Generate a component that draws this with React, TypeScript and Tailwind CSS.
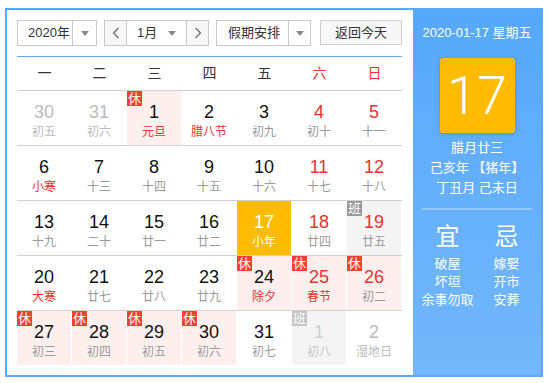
import React from "react";

type Kind = "normal" | "other";
type Day = {
  d: number;
  l: string;
  other?: boolean;
  weekend?: boolean;
  festival?: boolean;
  badge?: "rest" | "work";
  today?: boolean;
};

const weeks: Day[][] = [
  [
    { d: 30, l: "初五", other: true },
    { d: 31, l: "初六", other: true },
    { d: 1, l: "元旦", festival: true, badge: "rest" },
    { d: 2, l: "腊八节", festival: true },
    { d: 3, l: "初九" },
    { d: 4, l: "初十", weekend: true },
    { d: 5, l: "十一", weekend: true },
  ],
  [
    { d: 6, l: "小寒", festival: true },
    { d: 7, l: "十三" },
    { d: 8, l: "十四" },
    { d: 9, l: "十五" },
    { d: 10, l: "十六" },
    { d: 11, l: "十七", weekend: true },
    { d: 12, l: "十八", weekend: true },
  ],
  [
    { d: 13, l: "十九" },
    { d: 14, l: "二十" },
    { d: 15, l: "廿一" },
    { d: 16, l: "廿二" },
    { d: 17, l: "小年", today: true },
    { d: 18, l: "廿四", weekend: true },
    { d: 19, l: "廿五", weekend: true, badge: "work" },
  ],
  [
    { d: 20, l: "大寒", festival: true },
    { d: 21, l: "廿七" },
    { d: 22, l: "廿八" },
    { d: 23, l: "廿九" },
    { d: 24, l: "除夕", festival: true, badge: "rest" },
    { d: 25, l: "春节", festival: true, weekend: true, badge: "rest" },
    { d: 26, l: "初二", weekend: true, badge: "rest" },
  ],
  [
    { d: 27, l: "初三", badge: "rest" },
    { d: 28, l: "初四", badge: "rest" },
    { d: 29, l: "初五", badge: "rest" },
    { d: 30, l: "初六", badge: "rest" },
    { d: 31, l: "初七" },
    { d: 1, l: "初八", other: true, badge: "work" },
    { d: 2, l: "湿地日", other: true },
  ],
];

const weekdays = ["一", "二", "三", "四", "五", "六", "日"];

const Caret = () => (
  <span className="inline-block w-0 h-0 border-l-[4px] border-r-[4px] border-t-[5px] border-l-transparent border-r-transparent border-t-[#8a8a8a]" />
);

const Chevron = ({ dir }: { dir: "l" | "r" }) => (
  <svg width="8" height="12" viewBox="0 0 8 12">
    <polyline
      points={dir === "l" ? "6.5,1 1.5,6 6.5,11" : "1.5,1 6.5,6 1.5,11"}
      fill="none"
      stroke="#666"
      strokeWidth="1.2"
    />
  </svg>
);

const Cell = ({ day }: { day: Day }) => {
  let bg = "";
  if (day.today) bg = "bg-[#ffbb00]";
  else if (day.badge === "work") bg = "bg-[#f4f4f4]";
  else if (day.badge === "rest") bg = "bg-[#fdefee]";

  let numColor = "text-[#111]";
  if (day.today) numColor = "text-white";
  else if (day.other) numColor = day.badge === "work" ? "text-[#cfcfcf]" : "text-[#bbb]";
  else if (day.weekend) numColor = "text-[#e4342c]";

  let lunarColor = "text-[#9a9a9a]";
  if (day.today) lunarColor = "text-white";
  else if (day.other) lunarColor = day.badge === "work" ? "text-[#c8c8c8]" : "text-[#bbb]";
  else if (day.festival) lunarColor = "text-[#e4342c]";

  return (
    <div className="w-[55px] h-[54px] pr-px">
      <div className={`relative h-full flex flex-col items-center ${bg}`}>
        {day.badge && (
          <span
            className={`absolute left-0 top-0 w-[15px] h-[15px] text-[13px] leading-[15px] text-center text-white ${
              day.badge === "rest"
                ? "bg-[#f3402f]"
                : day.other
                ? "bg-[#c4c4c4]"
                : "bg-[#999]"
            }`}
          >
            {day.badge === "rest" ? "休" : "班"}
          </span>
        )}
        <span className={`mt-[10px] text-[18px] leading-[22px] ${numColor}`}>{day.d}</span>
        <span className={`mt-[1px] text-[12px] leading-[17px] ${lunarColor}`}>{day.l}</span>
      </div>
    </div>
  );
};

const App = () => {
  return (
    <div className="w-[550px] h-[383px] bg-white pt-[8px] pl-[5px] font-['Liberation_Sans','Noto_Sans_CJK_SC',sans-serif]">
      <div className="flex w-[538px] h-[369px] border-2 border-[#58aaf9]">
        {/* calendar */}
        <div className="w-[406px] pt-[10px] pl-[10px]">
          <div className="w-[385px] flex items-start pb-[10px] border-b border-[#5aaaf6] text-[13px] text-[#333]">
            <div className="flex w-[80px] h-[26px] border border-[#c8c8c8]">
              <span className="w-[54px] pl-[10px] leading-[24px]">2020年</span>
              <span className="flex-1 flex items-center justify-center border-l border-[#c8c8c8]">
                <Caret />
              </span>
            </div>
            <div className="ml-[7px] flex w-[105px] h-[26px] border border-[#c8c8c8]">
              <span className="w-[22px] flex items-center justify-center bg-[#f7f7f7] border-r border-[#c8c8c8]">
                <Chevron dir="l" />
              </span>
              <span className="flex-1 flex items-center pl-[10px] pr-[10px] justify-between">
                <span className="leading-[24px]">1月</span>
                <Caret />
              </span>
              <span className="w-[22px] flex items-center justify-center bg-[#f7f7f7] border-l border-[#c8c8c8]">
                <Chevron dir="r" />
              </span>
            </div>
            <div className="ml-[7px] flex w-[95px] h-[26px] border border-[#c8c8c8]">
              <span className="w-[71px] pl-[11px] leading-[24px]">假期安排</span>
              <span className="flex-1 flex items-center justify-center border-l border-[#c8c8c8]">
                <Caret />
              </span>
            </div>
            <button className="ml-[9px] w-[82px] h-[25px] border border-[#d0d0d0] bg-[#f7f7f7] leading-[23px] text-center text-[#333]">
              返回今天
            </button>
          </div>
          <div className="flex w-[385px] h-[33px] items-center text-[14px]">
            {weekdays.map((w, i) => (
              <span
                key={w}
                className={`w-[55px] text-center ${i >= 5 ? "text-[#e4342c]" : "text-[#333]"}`}
              >
                {w}
              </span>
            ))}
          </div>
          {weeks.map((wk, i) => (
            <div key={i} className="flex w-[385px] border-t border-[#d0d0d0]">
              {wk.map((day, j) => (
                <Cell key={j} day={day} />
              ))}
            </div>
          ))}
        </div>
        {/* side panel */}
        <div className="flex-1 flex flex-col items-center bg-gradient-to-b from-[#55a8fa] to-[#74b7fc] text-white">
          <div className="mt-[14px] text-[13px] leading-[18px]">2020-01-17 星期五</div>
          <div className="mt-[16px] w-[75px] h-[75px] rounded-[3px] bg-[#ffbb00] shadow-[0_1px_4px_rgba(0,0,0,0.15)] flex items-center justify-center">
            <span className="font-['Roboto'] font-light text-[54px] leading-none">17</span>
          </div>
          <div className="mt-[5px] text-[13px] leading-[20px]">腊月廿三</div>
          <div className="text-[13px] leading-[20px]">己亥年 【猪年】</div>
          <div className="text-[13px] leading-[20px]">丁丑月 己未日</div>
          <div className="mt-[10px] w-[110px] h-[2px] bg-white/30" />
          <div className="mt-[12px] flex">
            <div className="w-[59px] flex flex-col items-center">
              <span className="text-[24px] leading-[30px]">宜</span>
              <span className="mt-[3px] text-[13px] leading-[18px]">破屋</span>
              <span className="text-[13px] leading-[18px]">坏垣</span>
              <span className="text-[13px] leading-[18px] whitespace-nowrap">余事勿取</span>
            </div>
            <div className="w-[59px] flex flex-col items-center">
              <span className="text-[24px] leading-[30px]">忌</span>
              <span className="mt-[3px] text-[13px] leading-[18px]">嫁娶</span>
              <span className="text-[13px] leading-[18px]">开市</span>
              <span className="text-[13px] leading-[18px]">安葬</span>
            </div>
          </div>
        </div>
      </div>
    </div>
  );
};

export default App;
